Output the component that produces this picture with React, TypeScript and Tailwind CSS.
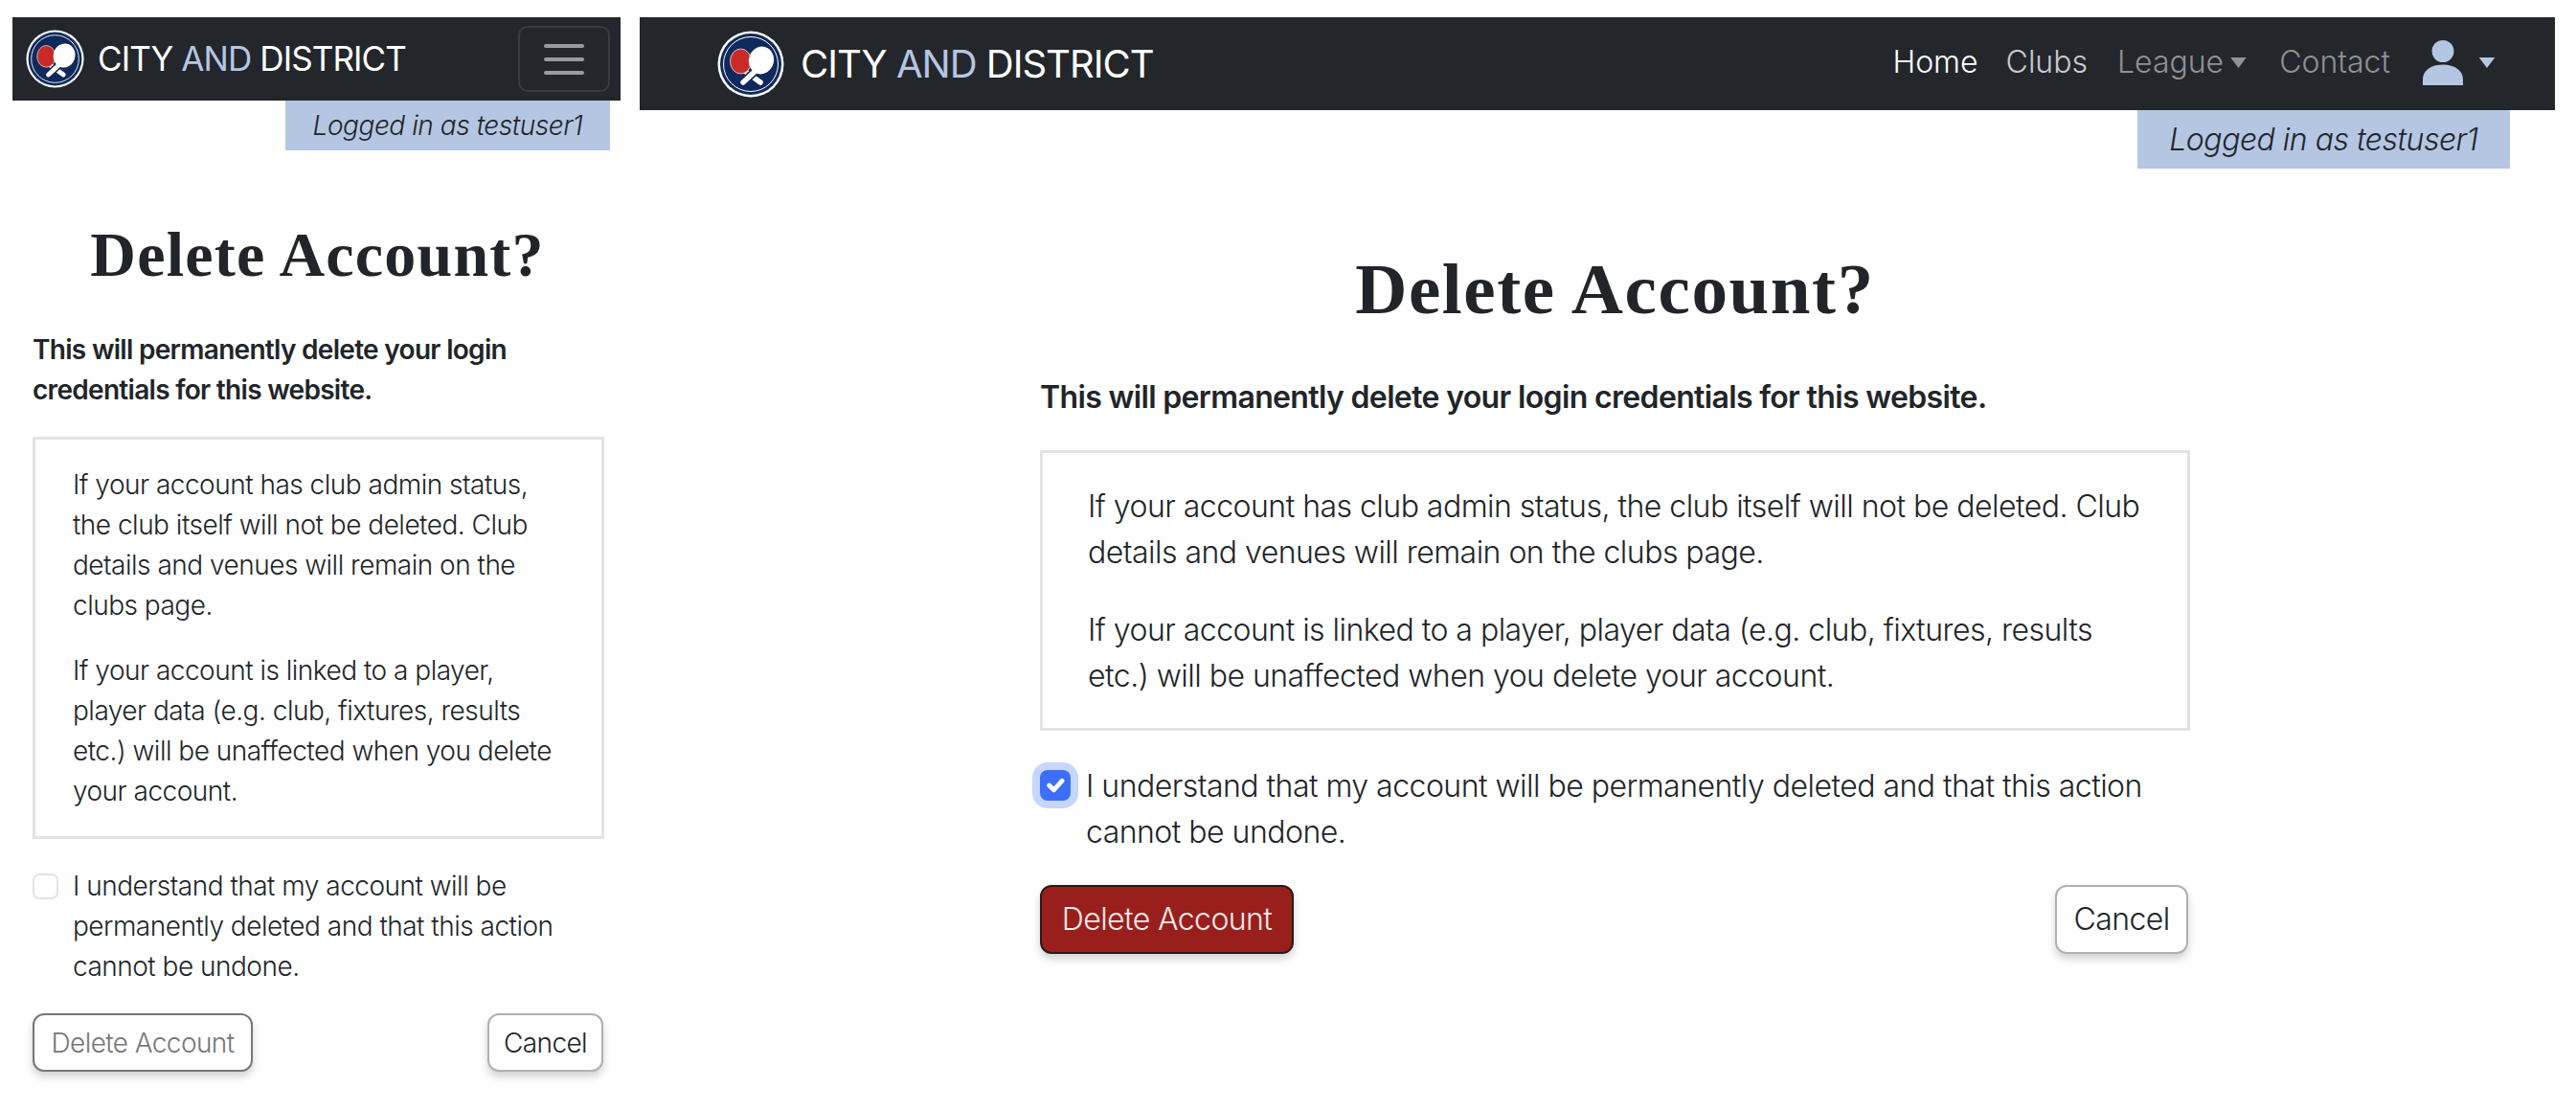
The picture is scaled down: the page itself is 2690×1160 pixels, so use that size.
const sans = "font-['Inter','Noto_Sans',sans-serif]";

function Logo({ className }: { className: string }) {
  return (
    <svg viewBox="0 0 70 70" className={className}>
      <circle cx="35" cy="35" r="34.5" fill="#ffffff" />
      <circle cx="35" cy="35" r="32" fill="#10295c" />
      <circle cx="35" cy="35" r="28.5" fill="none" stroke="#ffffff" strokeWidth="1" />
      <line x1="30" y1="43" x2="45" y2="54" stroke="#ffffff" strokeWidth="5.5" strokeLinecap="round" />
      <ellipse cx="24.500" cy="32" rx="11" ry="13" fill="#c92a26" stroke="#ffffff" strokeWidth="0.7" />
      <line x1="41" y1="41" x2="27" y2="54" stroke="#10295c" strokeWidth="9" />
      <line x1="41" y1="41" x2="27" y2="54" stroke="#ffffff" strokeWidth="5.5" strokeLinecap="round" />
      <ellipse cx="46" cy="31" rx="13" ry="14.500" transform="rotate(15 46 31)" fill="#ffffff" />
    </svg>
  );
}

function Caret({ className }: { className: string }) {
  return (
    <svg viewBox="0 0 18 12" className={className} fill="currentColor">
      <path d="M0 0h18L9 12z" />
    </svg>
  );
}

function Brand({ logo, text }: { logo: string; text: string }) {
  return (
    <div className="flex items-center">
      <Logo className={logo} />
      <span className={text}>
        CITY <span className="text-[#b5c6e3]">AND</span> DISTRICT
      </span>
    </div>
  );
}

function Narrow() {
  return (
    <section className="w-[635px] shrink-0">
      <header className="flex h-[87px] items-center justify-between bg-[#23262b] pl-[14px] pr-[11px]">
        <Brand logo="h-[61px] w-[61px]" text="ml-[14px] text-[35px] leading-none tracking-[-0.9px] text-white" />
        <div className="flex h-[69px] w-[96px] flex-col items-center justify-center gap-[10px] rounded-[10px] border-2 border-[#383b40]">
          <span className="h-1 w-[42px] rounded-full bg-[#9b9b9b]" />
          <span className="h-1 w-[42px] rounded-full bg-[#9b9b9b]" />
          <span className="h-1 w-[42px] rounded-full bg-[#9b9b9b]" />
        </div>
      </header>
      <div className="flex justify-end pr-[11px]">
        <p className="flex h-[52px] w-[339px] items-center justify-center bg-[#b5c6e3] text-[28px] font-[350] italic tracking-[-0.45px] text-[#212529]">
          Logged in as testuser1
        </p>
      </div>
      <div className="pl-[21px] pr-[17px] text-[28px] font-[350] leading-[42px] tracking-[-0.5px] text-[#212529]">
        <h1 className="mt-[72px] pr-[2px] text-center font-['Liberation_Serif',serif] text-[66px] font-bold leading-[74px] tracking-[1.2px]">
          Delete Account?
        </h1>
        <p className="mt-[41px] font-semibold tracking-[-0.7px]">
          This will permanently delete your login credentials for this website.
        </p>
        <div className="mt-[28px] border-[3px] border-[#e3e3e3] pb-[26px] pl-[39px] pr-[40px] pt-[26px]">
          <p>If your account has club admin status, the club itself will not be deleted. Club details and venues will remain on the clubs page.</p>
          <p className="mt-[26px]">If your account is linked to a player, player data (e.g. club, fixtures, results etc.) will be unaffected when you delete your account.</p>
        </div>
        <div className="mt-[28px] flex">
          <span className="mt-[8px] h-[27px] w-[27px] shrink-0 rounded-[7px] border-2 border-[#e3e3e3] bg-white" />
          <p className="ml-[15px]">I understand that my account will be permanently deleted and that this action cannot be undone.</p>
        </div>
        <div className="mt-[28px] flex justify-between tracking-[-0.6px]">
          <button className="h-[61px] w-[230px] rounded-[12px] border-2 border-[#777777] bg-white text-[#777777] shadow-[0_5px_8px_rgba(0,0,0,0.18)]">
            Delete Account
          </button>
          <button className="mr-[1px] h-[61px] w-[121px] rounded-[12px] border-2 border-[#b0b0b0] bg-white shadow-[0_5px_8px_rgba(0,0,0,0.18)]">
            Cancel
          </button>
        </div>
      </div>
    </section>
  );
}

function Wide() {
  return (
    <section className="w-[2000px] shrink-0">
      <header className="flex h-[97px] items-center justify-between bg-[#23262b] pl-[81px] pr-[62px]">
        <Brand logo="h-[70px] w-[70px]" text="ml-[17px] text-[40px] leading-none tracking-[-1px] text-white" />
        <nav className="flex items-center pb-[3px] text-[32px] font-[350]">
          <span className="text-white">Home</span>
          <span className="ml-[29px] text-[#c9cacb]">Clubs</span>
          <span className="ml-[31px] text-[#8f9194]">League</span>
          <Caret className="ml-[7px] h-[11px] w-[17px] text-[#8f9194]" />
          <span className="ml-[34px] text-[#8f9194]">Contact</span>
          <svg viewBox="0 0 42 47" className="ml-[34px] h-[47px] w-[42px]" fill="#b5c6e3">
            <ellipse cx="21" cy="11.5" rx="11.5" ry="11.5" />
            <path d="M0 47V41C0 32 8 25.500 21 25.500S42 32 42 41V47z" />
          </svg>
          <Caret className="ml-[16px] h-[11px] w-[18px] text-[#b5c6e3]" />
        </nav>
      </header>
      <div className="flex justify-end pr-[47px]">
        <p className="flex h-[61px] w-[389px] items-center justify-center bg-[#b5c6e3] text-[32px] font-[350] italic tracking-[-0.5px] text-[#212529]">
          Logged in as testuser1
        </p>
      </div>
      <div className="ml-[418px] w-[1201px] text-[32px] font-[350] leading-[48px] tracking-[-0.52px] text-[#212529]">
        <h1 className="mt-[84px] text-center font-['Liberation_Serif',serif] text-[75px] font-bold leading-[84px] tracking-[1.6px]">
          Delete Account?
        </h1>
        <p className="mt-[47px] font-semibold tracking-[-0.65px]">
          This will permanently delete your login credentials for this website.
        </p>
        <div className="mt-[31px] border-[3px] border-[#e3e3e3] pb-[30px] pl-[47px] pr-[40px] pt-[32px]">
          <p>If your account has club admin status, the club itself will not be deleted. Club details and venues will remain on the clubs page.</p>
          <p className="mt-[33px]">If your account is linked to a player, player data (e.g. club, fixtures, results etc.) will be unaffected when you delete your account.</p>
        </div>
        <div className="mt-[34px] flex">
          <span className="mt-[7px] flex h-[32px] w-[32px] shrink-0 items-center justify-center rounded-[8px] bg-[#3b6ffb] shadow-[0_0_0_8px_#c6d6ff]">
            <svg viewBox="0 0 20 20" className="h-[32px] w-[32px]" fill="none" stroke="#ffffff" strokeWidth="3" strokeLinecap="round" strokeLinejoin="round">
              <path d="M6 10l3 3 5.500-6" />
            </svg>
          </span>
          <p className="ml-[16px]">I understand that my account will be permanently deleted and that this action cannot be undone.</p>
        </div>
        <div className="mt-[31px] flex justify-between tracking-[-0.6px]">
          <button className="h-[72px] w-[265px] rounded-[12px] border-2 border-[#2b1a1a] bg-[#991f1c] text-[#fbeaea] shadow-[0_5px_8px_rgba(0,0,0,0.18)]">
            Delete Account
          </button>
          <button className="mr-[2px] h-[72px] w-[139px] rounded-[12px] border-2 border-[#b0b0b0] bg-white shadow-[0_5px_8px_rgba(0,0,0,0.18)]">
            Cancel
          </button>
        </div>
      </div>
    </section>
  );
}

export default function App() {
  return (
    <div className={`flex h-[1160px] w-[2690px] gap-[20px] overflow-hidden bg-white pl-[13px] pt-[18px] ${sans}`}>
      <Narrow />
      <Wide />
    </div>
  );
}
